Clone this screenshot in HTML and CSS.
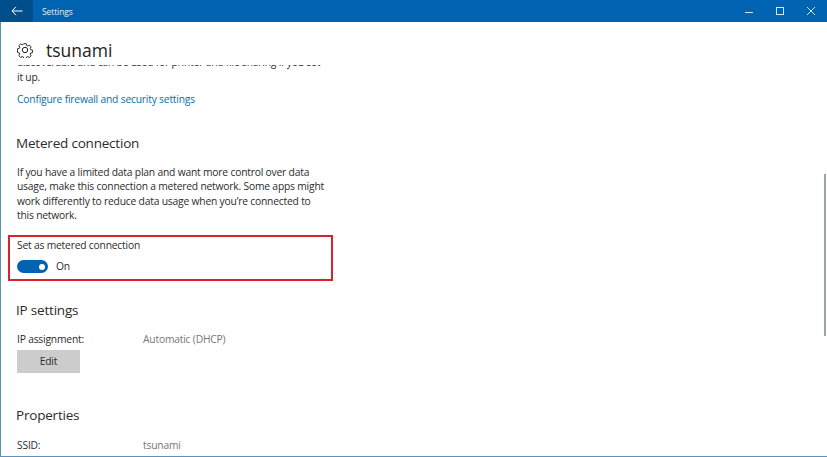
FILE: index.html
```html
<!DOCTYPE html>
<html lang="en">
<head>
<meta charset="utf-8">
<title>Settings</title>
<link rel="stylesheet" href="styles.css">
</head>
<body>
<div class="window">
  <header class="titlebar">
    <div class="back">
      <svg width="12" height="10" viewBox="0 0 12 10"><path d="M5 .8 1 5l4 4.200M1 5h10.500" fill="none" stroke="#fff" stroke-width="1"/></svg>
    </div>
    <span class="app-title">Settings</span>
    <div class="controls">
      <svg class="ctl" width="10" height="10" viewBox="0 0 10 10"><path d="M1 6.500h8" stroke="#d5e6f5" stroke-width="1"/></svg>
      <svg class="ctl" width="10" height="10" viewBox="0 0 10 10"><rect x="1.500" y="1.500" width="7" height="7" fill="none" stroke="#d5e6f5" stroke-width="1"/></svg>
      <svg class="ctl" width="10" height="10" viewBox="0 0 10 10"><path d="M1 1l8 8M9 1 1 9" stroke="#d5e6f5" stroke-width="1"/></svg>
    </div>
  </header>
  <div class="page-head">
    <svg class="gear" width="16" height="16" viewBox="0 0 16 16"><path d="M6.600 1h2.800l.4 2 1.300.6 1.800-1 1.900 2-1 1.700.5 1.300 2 .5v2.800l-2 .4-.5 1.300 1 1.800-2 1.900-1.700-1-1.300.5-.5 2H6.600l-.4-2-1.300-.5-1.800 1-1.900-2 1-1.700-.6-1.300-2-.5V6.600l2-.4.600-1.300-1-1.800 2-1.900 1.700 1 1.300-.6z" transform="translate(.8 .8) scale(.9)" fill="none" stroke="#222" stroke-width="1.050"/><circle cx="8" cy="8" r="2.700" fill="none" stroke="#222" stroke-width="1"/></svg>
    <h1 class="page-title">tsunami</h1>
  </div>
  <main class="scroller">
    <div class="content">
      <p class="para intro">discoverable and can be used for printer and file sharing if you set<br>it up.</p>
      <a class="link" href="#">Configure firewall and security settings</a>
      <h2 class="section-title metered">Metered connection</h2>
      <p class="para desc">If you have a limited data plan and want more control over data<br>usage, make this connection a metered network. Some apps might<br>work differently to reduce data usage when you’re connected to<br>this network.</p>
      <div class="highlight">
        <div class="toggle-label">Set as metered connection</div>
        <div class="toggle-row">
          <span class="toggle"><span class="knob"></span></span>
          <span>On</span>
        </div>
      </div>
      <h2 class="section-title ip">IP settings</h2>
      <div class="kv first"><span class="key">IP assignment:</span><span class="val">Automatic (DHCP)</span></div>
      <button class="edit" type="button">Edit</button>
      <h2 class="section-title props">Properties</h2>
      <div class="kv ssid"><span class="key">SSID:</span><span class="val">tsunami</span></div>
    </div>
    <div class="scrollbar"></div>
  </main>
</div>
</body>
</html>
```
FILE: styles.css
```css
* { box-sizing: border-box; }
html, body { margin: 0; height: 100%; }
body { font-family: "Open Sans", "Noto Sans", sans-serif; color: #2b2b2b; background: #fff; overflow: hidden; }
.window { width: 827px; height: 457px; display: flex; flex-direction: column; border-left: 1px solid #5a93ad; border-bottom: 1px solid #5a93c0; }
.titlebar { height: 22px; flex: none; background: #0063b1; color: #fff; display: flex; align-items: center; margin-left: -1px; }
.back { width: 33px; height: 22px; background: #004e8c; display: flex; align-items: center; justify-content: center; }
.app-title { font-size: 8.500px; letter-spacing: -.1px; margin-left: 9px; color: #e8f1f9; }
.controls { margin-left: auto; display: flex; gap: 21px; padding-right: 11px; }
.ctl { display: block; }
.page-head { height: 43px; flex: none; display: flex; align-items: center; padding: 13px 0 0 16px; }
.gear { flex: none; }
.page-title { margin: 0 0 0 13px; font-size: 17.500px; font-weight: 400; color: #222; line-height: 24px; }
.scroller { flex: 1; position: relative; overflow: hidden; }
.content { width: 330px; margin-top: -10px; padding-left: 16px; font-size: 10.300px; letter-spacing: -.2px; line-height: 15px; white-space: nowrap; }
.para { margin: 0; }
.link { display: block; margin-top: 7px; color: #0a6ea8; text-decoration: none; }
.section-title { margin: 0 0 0 -1px; font-size: 13.500px; letter-spacing: -.2px; font-weight: 400; line-height: 20px; color: #2b2b2b; }
.metered { margin-top: 26px; }
.desc { margin-top: 11.500px; line-height: 14.500px; }
.highlight { margin: 12.500px 0 0 -9px; width: 325px; height: 46px; border: 2px solid #d7232f; padding: 1px 0 0 7px; }
.toggle-label { line-height: 15px; }
.toggle-row { display: flex; align-items: center; gap: 8px; margin-top: 6px; }
.toggle { width: 31px; height: 13px; border-radius: 7px; background: #0063b1; display: flex; align-items: center; justify-content: flex-end; padding-right: 3px; }
.knob { width: 6px; height: 6px; border-radius: 50%; background: #fff; }
.ip { margin-top: 19px; }
.kv { display: flex; }
.first { margin-top: 12px; }
.key { width: 126px; flex: none; }
.val { color: #777; }
.edit { display: block; width: 63px; height: 23px; margin-top: 3px; border: 0; padding: 0; background: #ccc; color: #2b2b2b; font: inherit; letter-spacing: inherit; }
.props { margin-top: 32px; }
.ssid { margin-top: 13px; }
.scrollbar { position: absolute; right: 1px; top: 109px; width: 2px; height: 162px; background: #9aa5a5; }
```
